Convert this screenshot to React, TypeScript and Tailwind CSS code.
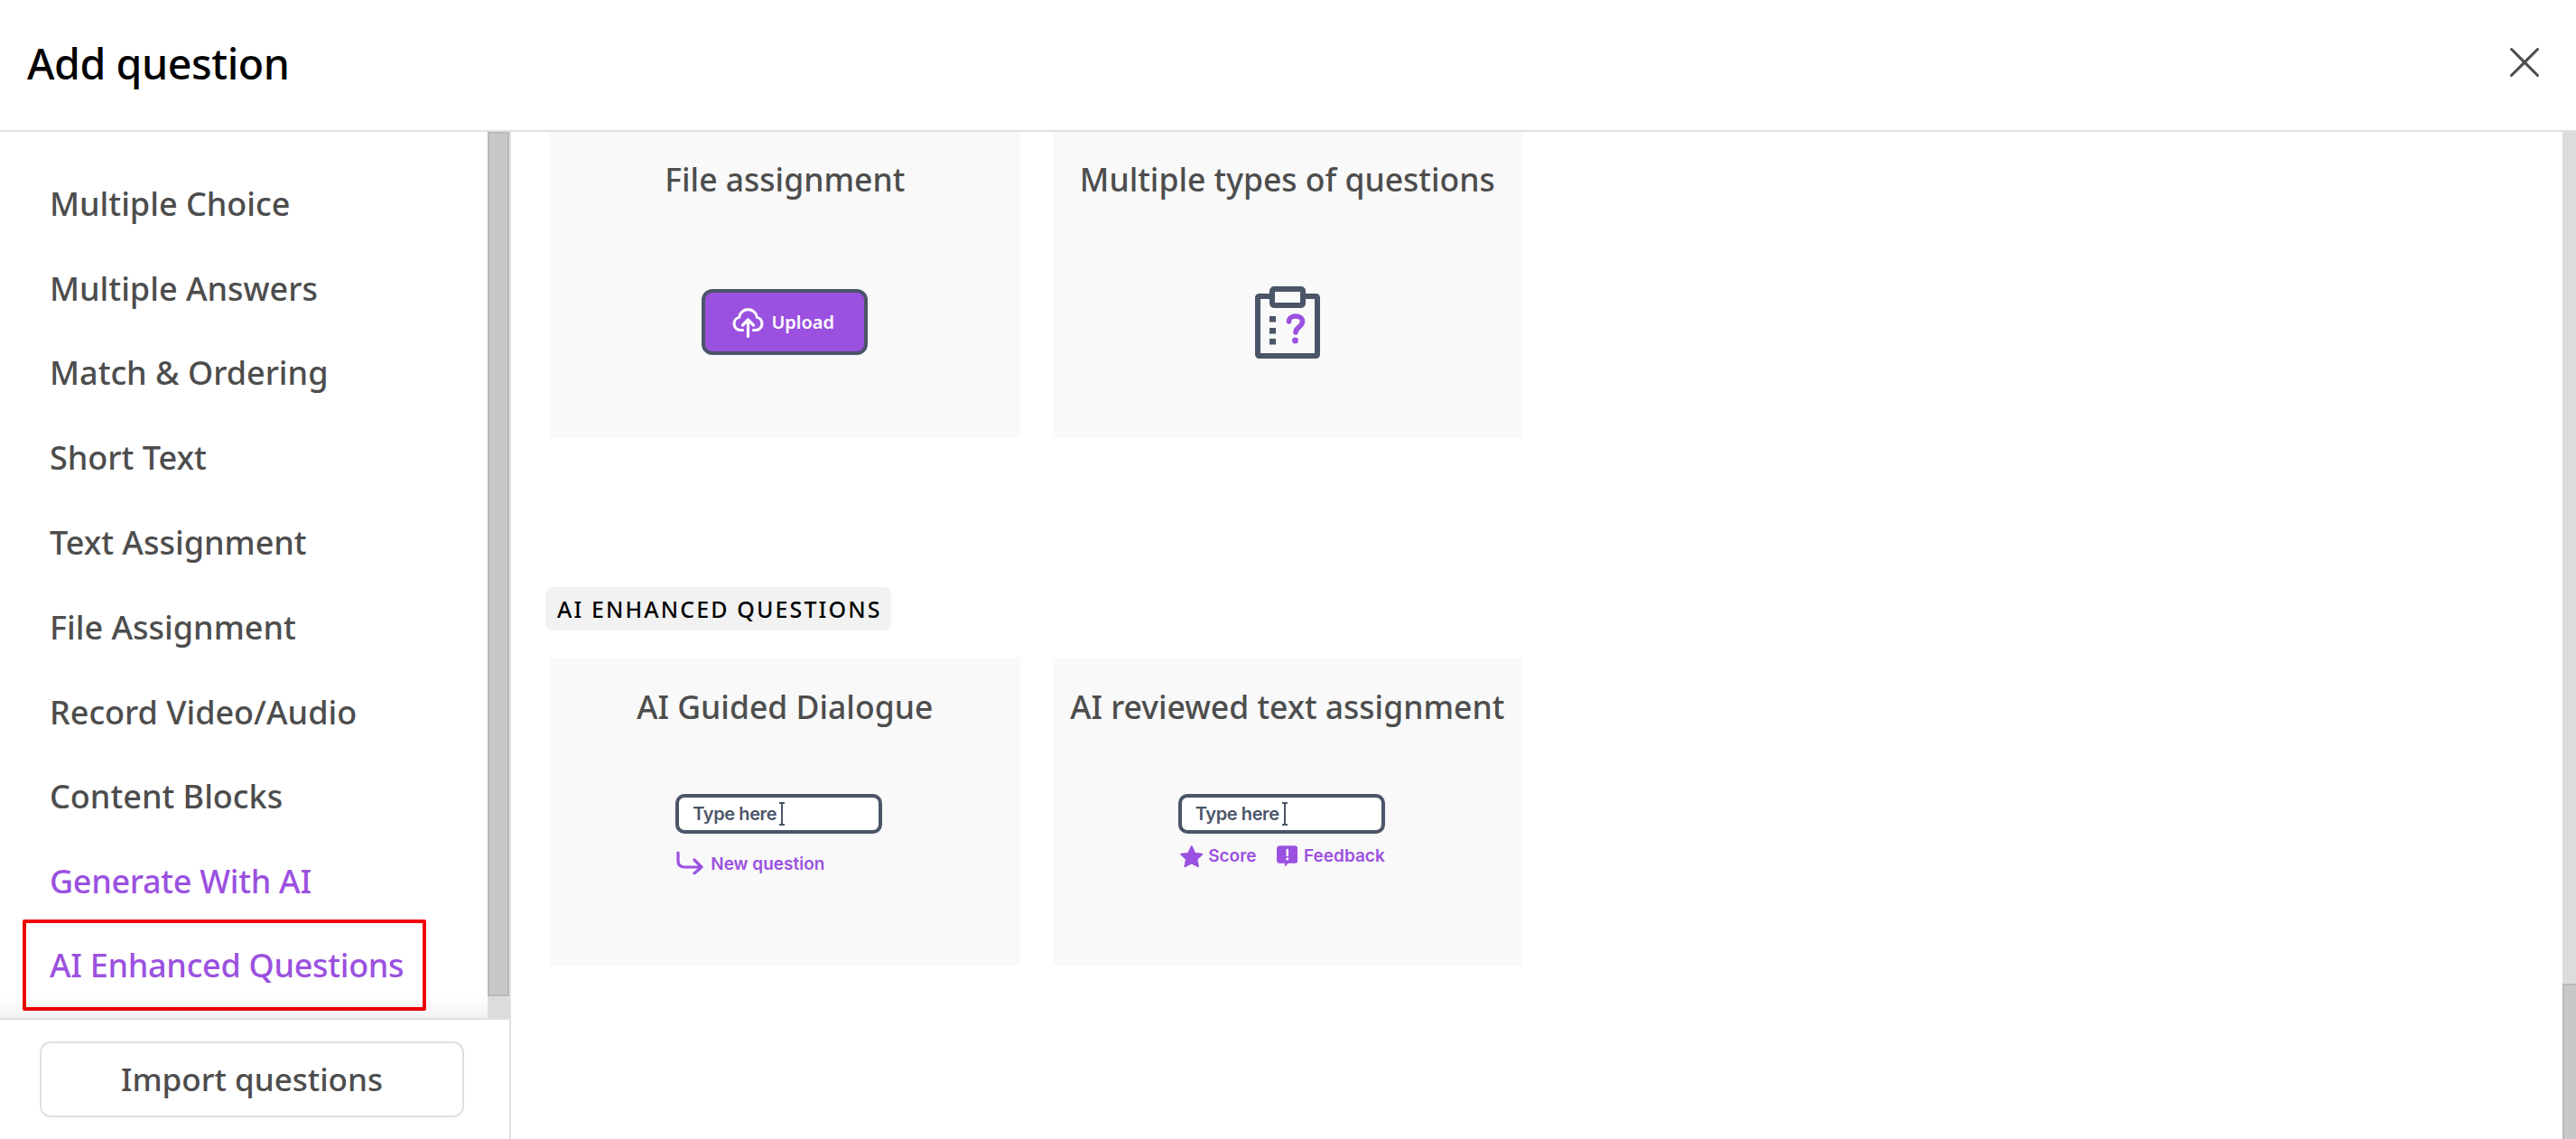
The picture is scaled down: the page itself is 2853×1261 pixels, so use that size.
import { X } from "lucide-react";
import type { ReactNode } from "react";

const MENU = [
  "Multiple Choice",
  "Multiple Answers",
  "Match & Ordering",
  "Short Text",
  "Text Assignment",
  "File Assignment",
  "Record Video/Audio",
  "Content Blocks",
];

function TypeBox() {
  return (
    <div className="flex h-[44px] w-[229px] items-center rounded-[10px] border-4 border-[#4b5568] bg-white pl-[15px] text-[20px] font-semibold text-[#4b5568]">
      <span className="tracking-[-0.4px]">Type here</span>
      <svg viewBox="0 0 8 26" className="ml-[2px] h-[26px] w-[8px]" fill="none" stroke="#4b5568" strokeWidth="2" aria-hidden="true">
        <path d="M1 1h6M4 1v24M1 25h6" />
      </svg>
    </div>
  );
}

function Card({ title, children }: { title: string; children: ReactNode }) {
  return (
    <div className="flex h-[341px] flex-col items-center bg-[#f9f9f9]">
      <h3 className="flex h-[110px] shrink-0 items-center text-[35.5px] font-medium whitespace-nowrap text-[#4d4d4d]">{title}</h3>
      {children}
    </div>
  );
}

export default function App() {
  return (
    <div className="flex h-screen w-screen flex-col overflow-hidden bg-white font-['Noto_Sans',sans-serif]">
      <header className="flex h-[146px] shrink-0 items-center justify-between border-b-2 border-[#e0e0e0] pr-[28px] pl-[30px]">
        <h1 className="mb-[3px] text-[46.5px] font-medium tracking-[-0.4px] text-black">Add question</h1>
        <button type="button" aria-label="Close" className="mb-[6px]">
          <X className="h-[58px] w-[58px] text-[#4d4d4d]" strokeWidth={1.25} />
        </button>
      </header>

      <div className="flex min-h-0 flex-1">
        <aside className="flex w-[566px] shrink-0 flex-col border-r-2 border-[#e0e0e0]">
          <div className="flex min-h-0 flex-1">
            <div className="relative min-w-0 flex-1">
              <ul className="flex flex-col pt-[33px] text-[36px] font-medium text-[#4d4d4d]">
                {MENU.map((item) => (
                  <li key={item} className="flex h-[93.8px] items-center pl-[55px]">
                    {item}
                  </li>
                ))}
                <li className="flex h-[93.8px] items-center pl-[55px] tracking-[-0.3px] text-[#9b51e0]">Generate With AI</li>
                <li className="mt-[-5px] ml-[25px] flex h-[101px] w-[447px] items-center rounded-[2px] border-4 border-[#f00000] pl-[26px] tracking-[-0.3px] text-[#9b51e0]">
                  AI Enhanced Questions
                </li>
              </ul>
              <div className="pointer-events-none absolute inset-x-0 bottom-0 h-[24px] bg-gradient-to-b from-transparent to-black/5" />
            </div>
            <div className="flex w-[24px] shrink-0 flex-col bg-[#dcdcdc]">
              <div className="h-[957px] border-2 border-[#b9b9b9] bg-[#c8c8c8]" />
            </div>
          </div>
          <div className="flex h-[134px] shrink-0 items-center justify-center border-t-2 border-[#e0e0e0] pr-[6px]">
            <button type="button" className="h-[84px] w-[470px] rounded-[12px] border-2 border-[#e0e0e0] text-[35px] font-medium text-[#4d4d4d]">
              Import questions
            </button>
          </div>
        </aside>

        <main className="min-w-0 flex-1 overflow-hidden pl-[43px]">
          <div className="mt-[-2px] grid w-[1077px] grid-cols-2 gap-x-[36px]">
            <Card title="File assignment">
              <div className="mt-[66px] flex h-[73px] w-[184px] items-center justify-center gap-[8px] rounded-[12px] border-4 border-[#4b5568] bg-[#9b51e0] pr-[3px] text-[20px] font-semibold text-white">
                <svg viewBox="0 0 35 35" className="h-[35px] w-[35px]" fill="none" stroke="white" strokeWidth="3.2" strokeLinecap="round" strokeLinejoin="round" aria-hidden="true">
                  <path d="M11.5 26.5H9a7.2 7.2 0 0 1-1.4-14.2a10 10 0 0 1 19.8 0A7.2 7.2 0 0 1 26 26.5h-2.5" />
                  <path d="M17.5 33.5V15M11.5 21l6-6 6 6" />
                </svg>
                Upload
              </div>
            </Card>
            <Card title="Multiple types of questions">
              <svg viewBox="0 0 72 80" className="mt-[63px] ml-[1px] h-[80px] w-[72px]" fill="none" aria-hidden="true">
                <rect x="3" y="11" width="66" height="66" rx="1.5" stroke="#4b5568" strokeWidth="6" />
                <rect x="19" y="3" width="34" height="18" rx="2" fill="#f9f9f9" stroke="#4b5568" strokeWidth="6" />
                <path d="M16 33h7v6.500h-7zM16 46h7v6.500h-7zM16 58h7v6.500h-7z" fill="#4b5568" />
                <path d="M37.500 39c0-8 15-8 15 0 0 6-7.500 6-7.500 12" stroke="#9b51e0" strokeWidth="5.500" strokeLinecap="round" />
                <circle cx="44.500" cy="60" r="3.400" fill="#9b51e0" />
              </svg>
            </Card>
          </div>

          <div className="mt-[165px] ml-[-5px] flex h-[48px] w-[383px] items-center rounded-[8px] bg-[#f2f2f2] pt-[2px] pl-[13px] text-[25px] font-medium tracking-[2.1px] text-black">
            AI ENHANCED QUESTIONS
          </div>

          <div className="mt-[30px] grid w-[1077px] grid-cols-2 gap-x-[36px]">
            <Card title="AI Guided Dialogue">
              <div className="mt-[41px] mr-[13px] w-[229px] font-['Inter',sans-serif]">
                <TypeBox />
                <div className="mt-[15px] flex items-center text-[19px] font-semibold text-[#9b51e0]">
                  <svg viewBox="0 0 30 26" className="ml-[1px] h-[26px] w-[30px]" fill="none" stroke="#9b51e0" strokeWidth="3.200" strokeLinecap="round" strokeLinejoin="round" aria-hidden="true">
                    <path d="M2 2v9q0 7 7 7h19M20 10l8 8-8 7" />
                  </svg>
                  <span className="mt-[5px] ml-[8px]">New question</span>
                </div>
              </div>
            </Card>
            <Card title="AI reviewed text assignment">
              <div className="mt-[41px] mr-[13px] w-[229px] font-['Inter',sans-serif]">
                <TypeBox />
                <div className="mt-[11px] flex items-center text-[19px] font-semibold text-[#9b51e0]">
                  <svg viewBox="0 0 28 26" className="ml-[1px] h-[26px] w-[28px]" fill="#9b51e0" stroke="#9b51e0" strokeWidth="2" strokeLinejoin="round" aria-hidden="true">
                    <path d="M14 2l3.600 7.600 8.300 1-6.100 5.700 1.600 8.200-7.400-4-7.400 4 1.600-8.200L2.100 10.600l8.300-1z" />
                  </svg>
                  <span className="ml-[5px]">Score</span>
                  <svg viewBox="0 0 24 24" className="ml-[22px] h-[24px] w-[24px]" aria-hidden="true">
                    <path d="M4 0h16a4 4 0 0 1 4 4v12a4 4 0 0 1-4 4h-7l-4 4v-4H4a4 4 0 0 1-4-4V4a4 4 0 0 1 4-4z" fill="#9b51e0" />
                    <path d="M12 5v6" stroke="white" strokeWidth="2.600" strokeLinecap="round" />
                    <circle cx="12" cy="15" r="1.500" fill="white" />
                  </svg>
                  <span className="ml-[7px]">Feedback</span>
                </div>
              </div>
            </Card>
          </div>
        </main>

        <div className="flex w-[15px] shrink-0 flex-col justify-end bg-[#dcdcdc]">
          <div className="h-[172px] border-t-2 border-l-2 border-[#b9b9b9] bg-[#c8c8c8]" />
        </div>
      </div>
    </div>
  );
}
